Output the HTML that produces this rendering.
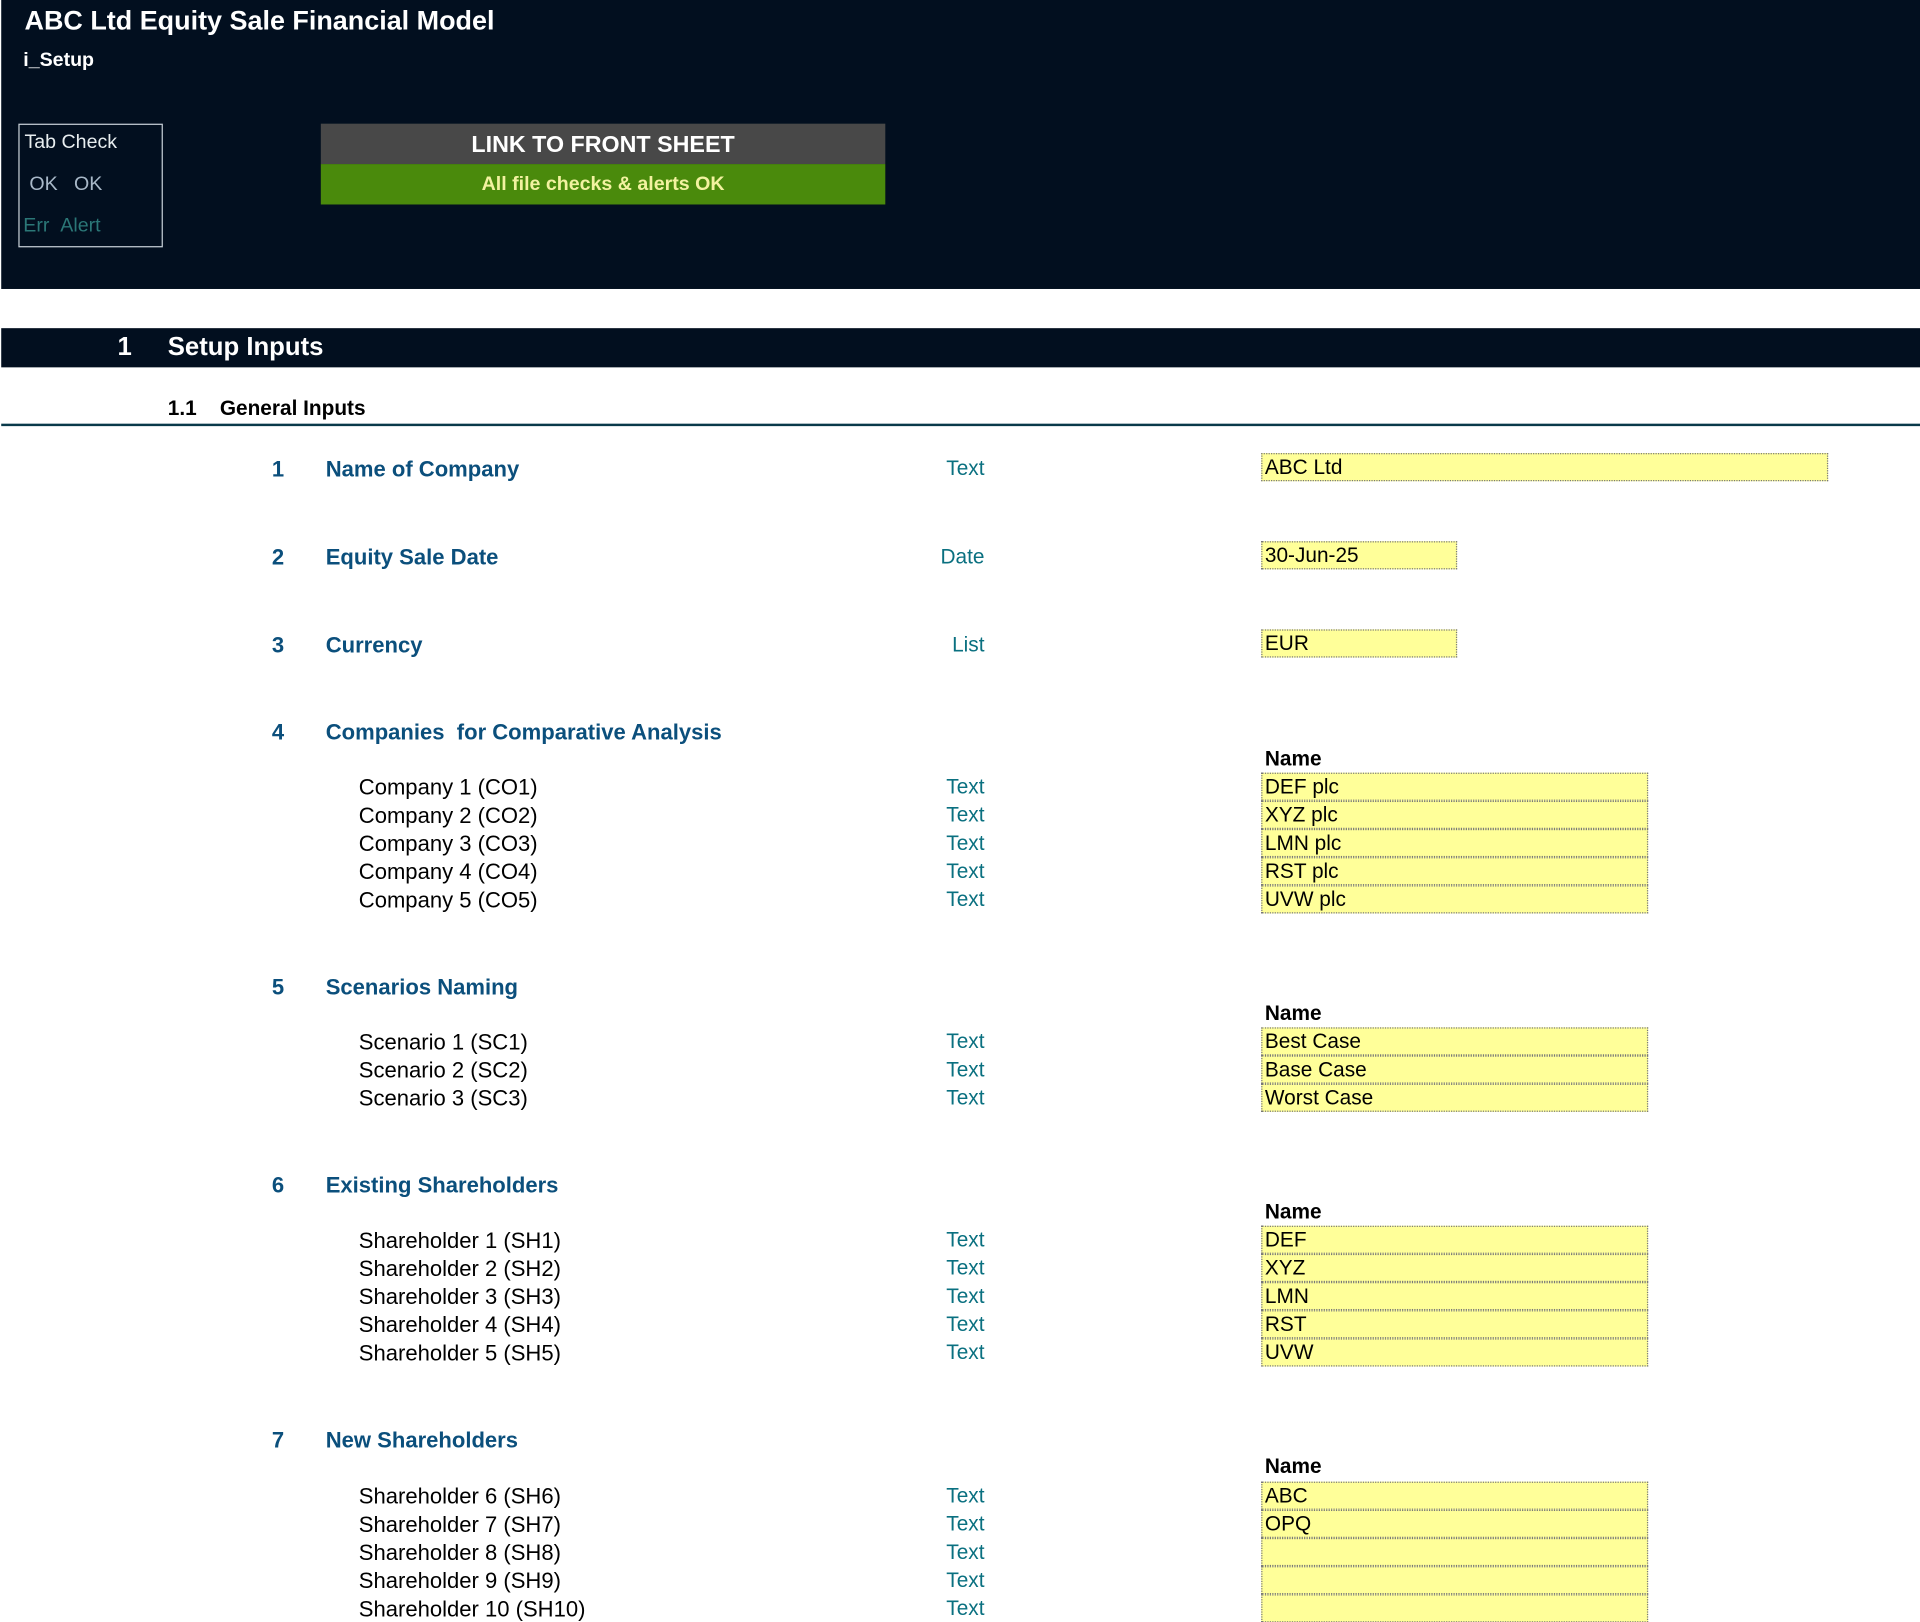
<!DOCTYPE html>
<html><head><meta charset="utf-8"><style>
html,body{margin:0;padding:0;background:#fff;width:1920px;height:1608px;overflow:hidden}
#w{position:absolute;left:0;top:0;width:1568px;height:1313px;transform:scale(1.22449);transform-origin:0 0;font-family:"Liberation Sans",Arial,sans-serif}
#w div{position:absolute;white-space:nowrap}
.hd{left:1px;top:0;width:1567px;height:236px;background:#020f1f}
.n,.h{font-size:18px;font-weight:bold;color:#0b4f7c;line-height:22px}
.n{left:222px}.h{left:266px}
.l{left:293px;font-size:18px;color:#000;line-height:22px}
.t{right:764px;font-size:17px;color:#0a7080;line-height:22px}
.nm{left:1033px;font-size:17px;font-weight:bold;color:#000;line-height:22px}
.i{left:1030px;width:316px;height:22px;background:#ffff99;border:1px dotted #777;font-size:17px;line-height:22px;padding-left:2px;box-sizing:border-box;height:23px}
</style></head><body><div id="w">
<div class="hd"></div>
<div style="left:20px;top:4px;font-size:22px;font-weight:bold;color:#fff">ABC Ltd Equity Sale Financial Model</div>
<div style="left:19px;top:41px;font-size:16px;font-weight:bold;color:#fff">i_Setup</div>
<div style="left:15px;top:101px;width:116px;height:99px;border:1px solid #c8d0d8"></div>
<div style="left:20px;top:108px;font-size:16px;color:#e8eef0">Tab Check</div>
<div style="left:24px;top:142px;font-size:16px;color:#a8b8c8">OK&nbsp;&nbsp;&nbsp;OK</div>
<div style="left:19px;top:176px;font-size:16px;color:#2b7777">Err&nbsp;&nbsp;Alert</div>
<div style="left:262px;top:101px;width:461px;height:33px;background:#484848;color:#fff;font-size:19px;font-weight:bold;text-align:center;line-height:35px">LINK TO FRONT SHEET</div>
<div style="left:262px;top:134px;width:461px;height:33px;background:#4a8a0c;color:#f2f2a0;font-size:16px;font-weight:bold;text-align:center;line-height:34px">All file checks &amp; alerts OK</div>
<div style="left:1px;top:268px;width:1567px;height:32px;background:#020f1f"></div>
<div style="left:96px;top:272px;font-size:21px;font-weight:bold;color:#fff">1</div>
<div style="left:137px;top:272px;font-size:21px;font-weight:bold;color:#fff">Setup Inputs</div>
<div style="left:137px;top:324px;font-size:17px;font-weight:bold;color:#000">1.1&nbsp;&nbsp;&nbsp;&nbsp;General Inputs</div>
<div style="left:1px;top:346px;width:1567px;height:2px;background:#0a3a4a"></div>

<div class="n" style="top:372px">1</div><div class="h" style="top:372px">Name of Company</div><div class="t" style="top:372px">Text</div>
<div class="i" style="top:370px;width:463px">ABC Ltd</div>
<div class="n" style="top:444px">2</div><div class="h" style="top:444px">Equity Sale Date</div><div class="t" style="top:444px">Date</div>
<div class="i" style="top:442px;width:160px">30-Jun-25</div>
<div class="n" style="top:516px">3</div><div class="h" style="top:516px">Currency</div><div class="t" style="top:516px">List</div>
<div class="i" style="top:514px;width:160px">EUR</div>

<div class="n" style="top:587px">4</div><div class="h" style="top:587px">Companies&nbsp; for Comparative Analysis</div>
<div class="nm" style="top:609px">Name</div>
<div class="l" style="top:632px">Company 1 (CO1)</div><div class="t" style="top:632px">Text</div><div class="i" style="top:631px">DEF plc</div>
<div class="l" style="top:655px">Company 2 (CO2)</div><div class="t" style="top:655px">Text</div><div class="i" style="top:654px">XYZ plc</div>
<div class="l" style="top:678px">Company 3 (CO3)</div><div class="t" style="top:678px">Text</div><div class="i" style="top:677px">LMN plc</div>
<div class="l" style="top:701px">Company 4 (CO4)</div><div class="t" style="top:701px">Text</div><div class="i" style="top:700px">RST plc</div>
<div class="l" style="top:724px">Company 5 (CO5)</div><div class="t" style="top:724px">Text</div><div class="i" style="top:723px">UVW plc</div>

<div class="n" style="top:795px">5</div><div class="h" style="top:795px">Scenarios Naming</div>
<div class="nm" style="top:817px">Name</div>
<div class="l" style="top:840px">Scenario 1 (SC1)</div><div class="t" style="top:840px">Text</div><div class="i" style="top:839px">Best Case</div>
<div class="l" style="top:863px">Scenario 2 (SC2)</div><div class="t" style="top:863px">Text</div><div class="i" style="top:862px">Base Case</div>
<div class="l" style="top:886px">Scenario 3 (SC3)</div><div class="t" style="top:886px">Text</div><div class="i" style="top:885px">Worst Case</div>

<div class="n" style="top:957px">6</div><div class="h" style="top:957px">Existing Shareholders</div>
<div class="nm" style="top:979px">Name</div>
<div class="l" style="top:1002px">Shareholder 1 (SH1)</div><div class="t" style="top:1002px">Text</div><div class="i" style="top:1001px">DEF</div>
<div class="l" style="top:1025px">Shareholder 2 (SH2)</div><div class="t" style="top:1025px">Text</div><div class="i" style="top:1024px">XYZ</div>
<div class="l" style="top:1048px">Shareholder 3 (SH3)</div><div class="t" style="top:1048px">Text</div><div class="i" style="top:1047px">LMN</div>
<div class="l" style="top:1071px">Shareholder 4 (SH4)</div><div class="t" style="top:1071px">Text</div><div class="i" style="top:1070px">RST</div>
<div class="l" style="top:1094px">Shareholder 5 (SH5)</div><div class="t" style="top:1094px">Text</div><div class="i" style="top:1093px">UVW</div>

<div class="n" style="top:1165px">7</div><div class="h" style="top:1165px">New Shareholders</div>
<div class="nm" style="top:1187px">Name</div>
<div class="l" style="top:1211px">Shareholder 6 (SH6)</div><div class="t" style="top:1211px">Text</div><div class="i" style="top:1210px">ABC</div>
<div class="l" style="top:1234px">Shareholder 7 (SH7)</div><div class="t" style="top:1234px">Text</div><div class="i" style="top:1233px">OPQ</div>
<div class="l" style="top:1257px">Shareholder 8 (SH8)</div><div class="t" style="top:1257px">Text</div><div class="i" style="top:1256px"></div>
<div class="l" style="top:1280px">Shareholder 9 (SH9)</div><div class="t" style="top:1280px">Text</div><div class="i" style="top:1279px"></div>
<div class="l" style="top:1303px">Shareholder 10 (SH10)</div><div class="t" style="top:1303px">Text</div><div class="i" style="top:1302px"></div>
</div></body></html>
